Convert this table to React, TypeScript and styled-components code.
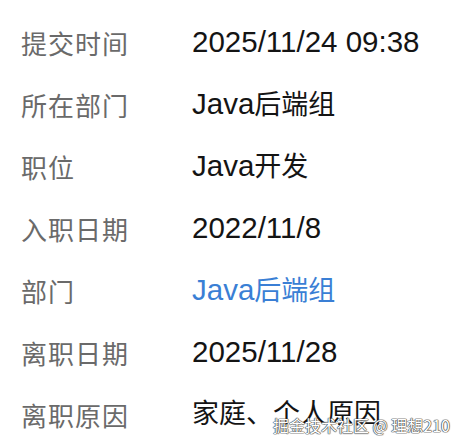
import React from "react";
import styled, { createGlobalStyle } from "styled-components";

const Global = createGlobalStyle`
  html, body { margin: 0; padding: 0; background: #fff; }
  body { width: 464px; height: 446px; overflow: hidden; }
`;

const Page = styled.div`
  position: relative;
  width: 464px;
  height: 446px;
  box-sizing: border-box;
  padding: 11px 0 0 21px;
  background: #fff;
  font-family: "Liberation Sans", "Noto Sans CJK SC", sans-serif;
`;

const List = styled.div`
  display: flex;
  flex-direction: column;
`;

const Row = styled.div`
  display: grid;
  grid-template-columns: 171px 1fr;
  align-items: center;
  height: 62px;
`;

const Label = styled.div`
  font-size: 26px;
  letter-spacing: 1px;
  color: #6a6a6a;
  white-space: nowrap;
`;

const Value = styled.div<{ $link?: boolean }>`
  font-size: 27px;
  line-height: 36px;
  color: ${(p) => (p.$link ? "#3a7fd5" : "#141414")};
  white-space: nowrap;
`;

const Latin = styled.span`
  font-size: 29.5px;
`;

const Watermark = styled.div`
  position: absolute;
  left: 273px;
  top: 414px;
  font-family: "Noto Sans CJK SC", sans-serif;
  font-size: 16px;
  line-height: 22px;
  color: #ffffff;
  white-space: nowrap;
  text-shadow: 0 0 1px #444, 0 0 1px #444, 0 0 1px #444, 0 0 1px #444;
`;

const rows: { label: string; value: string; link?: boolean }[] = [
  { label: "提交时间", value: "2025/11/24 09:38" },
  { label: "所在部门", value: "Java后端组" },
  { label: "职位", value: "Java开发" },
  { label: "入职日期", value: "2022/11/8" },
  { label: "部门", value: "Java后端组", link: true },
  { label: "离职日期", value: "2025/11/28" },
  { label: "离职原因", value: "家庭、个人原因" },
];

function renderValue(text: string) {
  const parts = text.match(/[\x20-\x7e]+|[^\x20-\x7e]+/g) || [];
  return parts.map((p, i) =>
    /^[\x20-\x7e]+$/.test(p) ? <Latin key={i}>{p}</Latin> : <span key={i}>{p}</span>
  );
}

export default function App() {
  return (
    <>
      <Global />
      <Page>
        <List>
          {rows.map((r) => (
            <Row key={r.label}>
              <Label>{r.label}</Label>
              <Value $link={r.link}>{renderValue(r.value)}</Value>
            </Row>
          ))}
        </List>
        <Watermark>掘金技术社区 @ 理想210</Watermark>
      </Page>
    </>
  );
}
